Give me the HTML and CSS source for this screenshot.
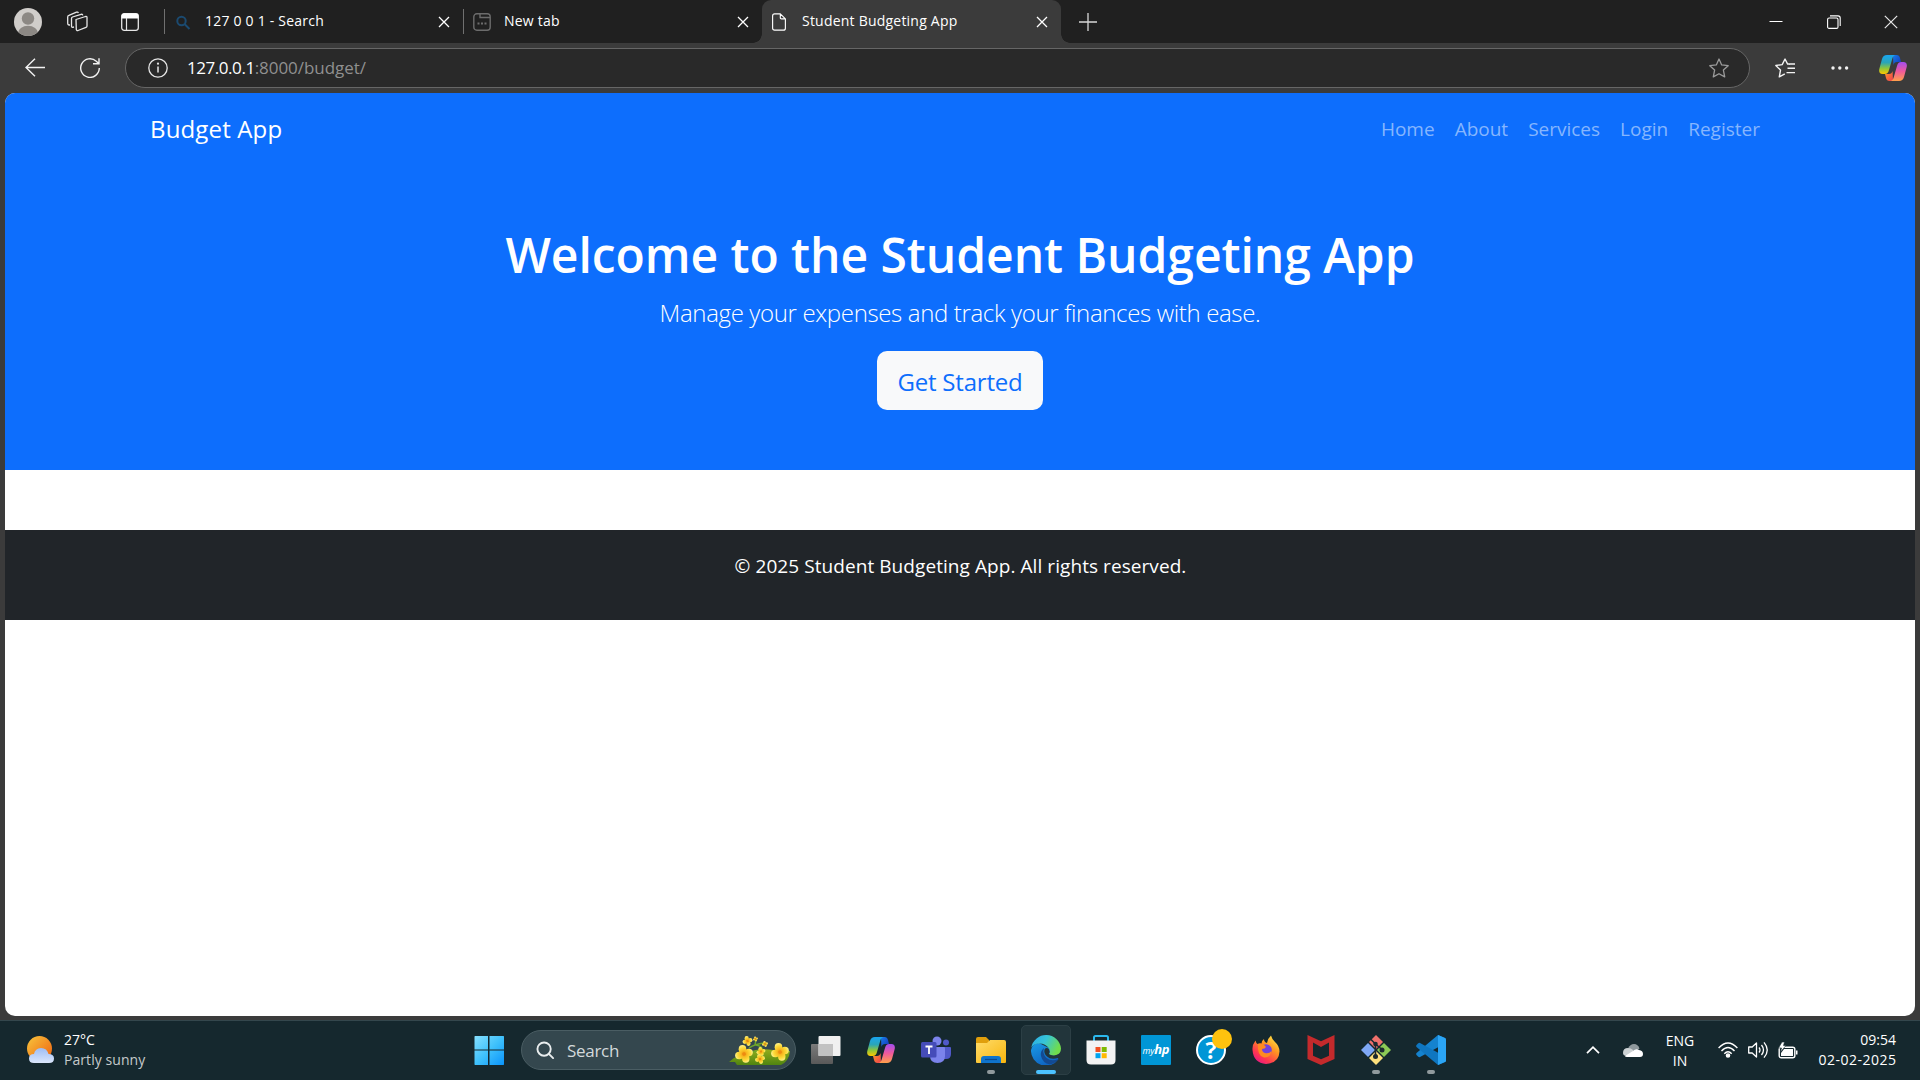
FILE: index.html
```html
<!DOCTYPE html>
<html lang="en">
<head>
<meta charset="utf-8">
<title>Student Budgeting App</title>
<link rel="stylesheet" href="styles.css">
</head>
<body>
<svg class="defs" aria-hidden="true">
  <defs>
    <linearGradient id="cpA" x1="0" y1="0" x2="0" y2="1"><stop offset="0" stop-color="#19a5f0"/><stop offset=".4" stop-color="#2aa5b8"/><stop offset=".7" stop-color="#8fc63a"/><stop offset="1" stop-color="#ffc800"/></linearGradient>
    <linearGradient id="cpB" x1="0" y1="0" x2="0" y2="1"><stop offset="0" stop-color="#a24df0"/><stop offset=".5" stop-color="#f05a9a"/><stop offset="1" stop-color="#ffa04a"/></linearGradient>
    <linearGradient id="cpC" x1="0" y1="0" x2="1" y2="1"><stop offset="0" stop-color="#1b7be8"/><stop offset="1" stop-color="#1236b8"/></linearGradient>
    <linearGradient id="cpD" x1="0" y1="0" x2="1" y2="1"><stop offset="0" stop-color="#ff9a2a"/><stop offset="1" stop-color="#ee3d4e"/></linearGradient>
    <linearGradient id="win" x1="0" y1="0" x2="1" y2="1"><stop offset="0" stop-color="#86e0ff"/><stop offset=".5" stop-color="#3fc1fb"/><stop offset="1" stop-color="#0a94fb"/></linearGradient>
    <linearGradient id="sun" x1="0" y1="0" x2="1" y2="1"><stop offset="0" stop-color="#f8c63c"/><stop offset="1" stop-color="#ee5f10"/></linearGradient>
    <linearGradient id="cloud" x1="0" y1="0" x2="0" y2="1"><stop offset="0" stop-color="#9dbdf5"/><stop offset="1" stop-color="#dbe6fb"/></linearGradient>
    <linearGradient id="folder" x1="0" y1="0" x2="1" y2="1"><stop offset="0" stop-color="#ffdc6a"/><stop offset="1" stop-color="#f8b50d"/></linearGradient>
    <linearGradient id="edgeA" x1="0" y1="0" x2="1" y2=".4"><stop offset="0" stop-color="#2aa9e8"/><stop offset=".5" stop-color="#36c5d8"/><stop offset="1" stop-color="#6fdc4d"/></linearGradient>
    <linearGradient id="edgeB" x1="0" y1="0" x2=".6" y2="1"><stop offset="0" stop-color="#1a9be6"/><stop offset="1" stop-color="#0e62c0"/></linearGradient>
    <linearGradient id="fox" x1=".9" y1="0" x2=".2" y2="1"><stop offset="0" stop-color="#fff04a"/><stop offset=".4" stop-color="#ff9422"/><stop offset=".75" stop-color="#ff3750"/><stop offset="1" stop-color="#e3158a"/></linearGradient>
    <linearGradient id="gray" x1="0" y1="0" x2="0" y2="1"><stop offset="0" stop-color="#7b7b7b"/><stop offset="1" stop-color="#595959"/></linearGradient>
    <linearGradient id="hill" x1="0" y1="0" x2="0" y2="1"><stop offset="0" stop-color="#93ad1c"/><stop offset="1" stop-color="#4f8410"/></linearGradient>
    <radialGradient id="petal" gradientUnits="userSpaceOnUse" cx="0" cy="0" r="9"><stop offset="0" stop-color="#ee900f"/><stop offset=".35" stop-color="#f9bd22"/><stop offset=".7" stop-color="#fddc3c"/><stop offset="1" stop-color="#fff08a"/></radialGradient>
    <symbol id="copilot" viewBox="0 0 28 26">
      <path d="M14 0h3.500c2 0 3 1 3.500 3l1 4h-4c-2 0-3 1-3.600 3z" fill="url(#cpC)"/>
      <path d="M14 26h-3.500c-2 0-3-1-3.500-3l-1-4h4c2 0 3-1 3.600-3z" fill="url(#cpD)"/>
      <path d="M8 0h8.500c-2 .6-2.700 2-3.300 4L10 15c-.7 2.500-1.800 4-4.300 4H3.500C.7 19-.3 17 .3 14L3 4C3.800 1.300 5.300 0 8 0z" fill="url(#cpA)"/>
      <path d="M20 26h-8.500c2-.6 2.700-2 3.300-4L18 11c.7-2.500 1.800-4 4.300-4h2.200c2.800 0 3.800 2 3.200 5L25 22c-.8 2.700-2.300 4-5 4z" fill="url(#cpB)"/>
    </symbol>
    <symbol id="x" viewBox="0 0 12 12"><path d="M1 1l10 10M11 1L1 11" stroke="#fff" stroke-width="1.300" fill="none"/></symbol>
    <symbol id="flower" viewBox="-9 -9 18 18">
      <g fill="url(#petal)"><ellipse cx="-1.500" cy="-4.700" rx="3.800" ry="4.200"/><ellipse cx="4.800" cy="-1.500" rx="4" ry="3.700"/><ellipse cx="1.800" cy="4.700" rx="3.700" ry="4.100"/><ellipse cx="-4.700" cy="1.500" rx="4.200" ry="3.700"/></g>
      <circle r="1.800" fill="#ee8a10"/>
    </symbol>
  </defs>
</svg>

<header class="titlebar">
  <svg class="avatar" viewBox="0 0 28 28"><clipPath id="av"><circle cx="14" cy="14" r="14"/></clipPath><g clip-path="url(#av)"><path fill="#d0cdca" d="M0 0h28v28H0z"/><circle cx="14" cy="10.500" r="6.200" fill="#8c8884"/><ellipse cx="14" cy="25" rx="10" ry="7.200" fill="#8c8884"/></g></svg>
  <svg class="workspaces" viewBox="0 0 21 21" fill="none" stroke="#e6e6e6" stroke-width="1.300" stroke-linejoin="round"><path d="M9 8.500l9.500-3q1.500-.4 1.500 1v8.500q0 1-1 1.400L11 19.500q-1.500.4-1.700-1z"/><path d="M7 16l-1.500.3q-1 0-1-1V7.500q0-1 1-1.500L14 3.300q1.500-.3 1.700 1M3 14H2q-1.300-.2-1.300-1.400V6q0-1.200 1.200-1.600L9.500 1.200q1.500-.4 1.800.8"/></svg>
  <svg class="tabmenu" viewBox="0 0 18 18"><rect x=".7" y=".7" width="16.600" height="16.600" rx="2.500" fill="none" stroke="#e6e6e6" stroke-width="1.300"/><path d="M.5 5.500V3Q.5.500 3 .5h12q2.500 0 2.500 2.500v2.500z" fill="#fff"/><path d="M5.500 5v12" stroke="#e6e6e6" stroke-width="1.200"/></svg>
  <div class="tab">
    <svg class="favicon" viewBox="0 0 18 18" fill="none" stroke="#1b4a70" stroke-width="2"><circle cx="7.500" cy="8" r="4.200"/><path d="M10.500 11l5 5"/></svg>
    <span class="tab-title">127 0 0 1 - Search</span>
    <svg class="close"><use href="#x"/></svg>
  </div>
  <div class="tab">
    <svg class="favicon" viewBox="0 0 18 18" fill="none" stroke="#6c6c6c" stroke-width="1.400"><rect x=".8" y=".8" width="16.400" height="16.400" rx="3"/><path d="M7 1v3.500h10" /><path d="M4.500 10.500h2M8 10.500h2M11.500 10.500h2" stroke-width="2"/></svg>
    <span class="tab-title">New tab</span>
    <svg class="close"><use href="#x"/></svg>
  </div>
  <div class="tab tab-active">
    <svg class="favicon doc" viewBox="0 0 16 20" fill="none" stroke="#fff" stroke-width="1.300" stroke-linejoin="round"><path d="M3 .7h6.500L15.300 6.500V17q0 2.300-2.300 2.300H3Q.7 19.300.7 17V3Q.7.700 3 .7zM9.500.8V5q0 1.500 1.500 1.500h4"/></svg>
    <span class="tab-title">Student Budgeting App</span>
    <svg class="close"><use href="#x"/></svg>
  </div>
  <svg class="newtab" viewBox="0 0 18 18"><path d="M9 0v18M0 9h18" stroke="#d8d8d8" stroke-width="1.300"/></svg>
  <div class="window-controls">
    <svg viewBox="0 0 14 14"><path d="M.5 6.500h13" stroke="#fff"/></svg>
    <svg viewBox="0 0 14 14" fill="none" stroke="#fff" stroke-width="1.100"><rect x=".6" y="3" width="10.400" height="10.400" rx="1.500"/><path d="M3 .9h8q2.200 0 2.200 2.200v8"/></svg>
    <svg viewBox="0 0 14 14"><path d="M.8.800l12.400 12.400M13.200.800L.8 13.200" stroke="#e8e8e8" stroke-width="1.200"/></svg>
  </div>
</header>

<div class="toolbar">
  <svg class="back" viewBox="0 0 20 20" fill="none" stroke="#f2f2f2" stroke-width="1.400"><path d="M20 9.500H1M10 .8L1 9.500l9 8.700"/></svg>
  <svg class="refresh" viewBox="0 0 20 20" fill="none" stroke="#f2f2f2" stroke-width="1.400"><path d="M19.300 10a9.300 9.300 0 1 1-3-6.800L19 5.700M19 .3v5.500h-6"/></svg>
  <div class="address">
    <svg class="ico" viewBox="0 0 20 20"><circle cx="10" cy="10" r="9.200" fill="none" stroke="#e6e6e6" stroke-width="1.300"/><path d="M10 8.500v6" stroke="#e6e6e6" stroke-width="1.500"/><circle cx="10" cy="5.700" r="1.100" fill="#e6e6e6"/></svg>
    <span class="url"><span class="host">127.0.0.1</span><span class="path">:8000/budget/</span></span>
    <svg class="ico" viewBox="0 0 20 20" fill="none" stroke="#9a9a9a" stroke-width="1.300" stroke-linejoin="round"><path d="M10 1l2.700 5.900 6.500.8-4.800 4.400 1.300 6.800-5.700-3.200-5.700 3.200 1.300-6.800L.8 7.700l6.500-.8z"/></svg>
  </div>
  <svg class="favs" viewBox="0 0 20 20" fill="none" stroke="#f2f2f2" stroke-width="1.400" stroke-linejoin="round"><path d="M15 6.200l-2.500-.3L10 1 7.200 6.600l-6.400.9 4.700 4.600-1.200 6.800 5.500-3M12 6h8M12.500 10.300H20M11.500 14.600H20"/></svg>
  <svg class="dots" viewBox="0 0 18 4" fill="#f2f2f2"><circle cx="2" cy="2" r="1.700"/><circle cx="8.800" cy="2" r="1.700"/><circle cx="15.600" cy="2" r="1.700"/></svg>
  <svg class="copilot"><use href="#copilot"/></svg>
</div>

<main class="page">
  <nav class="navbar">
    <a class="brand">Budget App</a>
    <ul class="links"><li>Home</li><li>About</li><li>Services</li><li>Login</li><li>Register</li></ul>
  </nav>
  <section class="hero">
    <h1>Welcome to the Student Budgeting App</h1>
    <p class="lead">Manage your expenses and track your finances with ease.</p>
    <a class="btn">Get Started</a>
  </section>
  <footer class="footer"><p>© 2025 Student Budgeting App. All rights reserved.</p></footer>
</main>

<footer class="taskbar">
  <div class="weather">
    <svg viewBox="0 0 28 28"><circle cx="12.500" cy="12.500" r="12.500" fill="url(#sun)"/><path d="M7 27q-5 0-5-4.500T7 18q1-5.500 7-6 6 0 7.500 6 5.500 0 5.500 4.500T22 27z" fill="url(#cloud)"/></svg>
    <div class="two-line"><span>27°C</span><span class="condition">Partly sunny</span></div>
  </div>
  <div class="apps">
    <div class="app"><svg viewBox="0 0 30 30"><path d="M1 1h13v13.500H.5V1.500zM15.500 1h14l.5.500v13H15.500zM.5 15.500H14V30H1l-.5-.5zM15.500 15.500H30v14l-.5.500h-14z" fill="url(#win)"/></svg></div>
    <div class="search">
      <svg class="lens" viewBox="0 0 20 20" fill="none" stroke="#e9edee" stroke-width="2" stroke-linecap="round"><circle cx="8.500" cy="8.500" r="7"/><path d="M13.500 13.500l4.500 4.500"/></svg>
      <span class="search-text">Search</span>
      <svg class="flowers" viewBox="0 0 62 32"><path d="M0 28l5-4 3-1Q26 13 44 16l17 1q-1 10-9 14H8l-2-3z" fill="url(#hill)"/><path d="M20 14q6-4 15-5M27 11q7 1 7 7M26 11l1-6M22 18l9-1" stroke="#6fa62a" stroke-width="1.500" fill="none"/><use href="#flower" x="6" y="11" width="18" height="18"/><use href="#flower" x="42" y="9" width="18" height="18"/><use href="#flower" x="12" y="2" width="13" height="10"/><use href="#flower" x="27" y="13" width="10" height="9"/><use href="#flower" x="32" y="7" width="8" height="6"/><use href="#flower" x="24" y="1" width="5" height="8"/><use href="#flower" x="26" y="20" width="10" height="10"/></svg>
    </div>
    <div class="app"><svg viewBox="0 0 30 30"><rect y="9" width="22" height="20" rx="1" fill="url(#gray)"/><rect x="7.500" y="1" width="22" height="20" rx="1" fill="#f0f0f0"/><path d="M7.500 9H22v12H7.500z" fill="#c2c2c2"/></svg></div>
    <div class="app"><svg class="cp"><use href="#copilot"/></svg></div>
    <div class="app"><svg viewBox="0 0 30 30"><circle cx="25" cy="7.500" r="3" fill="#5059c9"/><path d="M20 12h9q1 0 1 1v6q0 5-5 5h-4z" fill="#5059c9"/><circle cx="16" cy="6" r="4.500" fill="#7b83eb"/><path d="M9 12h14q1 0 1 1v8q0 7-7.500 7T9 21z" fill="#7b83eb"/><rect y="7" width="15.500" height="15.500" rx="1.500" fill="#454cb8"/><path d="M4.500 11.500h7M8 11.500v7.500" stroke="#fff" stroke-width="1.800"/></svg></div>
    <div class="app run"><svg viewBox="0 0 30 30"><path d="M0 4q0-2 2-2h8l3 3v6H0z" fill="#e09f0c"/><path d="M0 8h11l3-3h14q2 0 2 2v20q0 1-1 1H1q-1 0-1-1z" fill="url(#folder)"/><path d="M5 28v-4q0-3 3-3h14q3 0 3 3v4z" fill="#0f74cc"/><path d="M9 24.500h12" stroke="#0a4a90" stroke-width="1.200"/></svg></div>
    <div class="app active"><svg viewBox="0 0 30 30"><path d="M0 15Q1 9 8 8l10 5 9.500 11A15 15 0 0 1 0 15z" fill="url(#edgeB)"/><path d="M.3 12.500A15 15 0 0 1 30 13.500q0 6-6 7-4 .5-6-1 2-3 0-6Q14.500 8.500 8.500 8.500 3 8.500.3 12.500z" fill="url(#edgeA)"/><path d="M13 13q-4 3-3 8 1.500 7 9 8.500Q25 28 27.500 24q-7 3-12-1-4.500-4.500-2.500-10z" fill="#134a92"/><path d="M13.500 14.500q2-2.500 4.300-.5 1.500 2.500 0 5 2.700 2 6.500 1.200l4.500-1.500-1.300 4q-7.500 2.500-11.500-1.200-3.500-3-2.500-7z" fill="#22353b"/></svg></div>
    <div class="app"><svg viewBox="0 0 30 30"><path d="M8 7V2.500Q8 1 9.500 1h11Q22 1 22 2.500V7" fill="none" stroke="#2bb9ee" stroke-width="2"/><path d="M.5 5.500h29V25q0 4.500-4.500 4.500H5Q.5 29.500.5 25z" fill="#f3f3f3"/><path d="M9.500 12h5v5h-5z" fill="#f25022"/><path d="M15.700 12h5v5h-5z" fill="#7fba00"/><path d="M9.500 18.200h5v5h-5z" fill="#00a4ef"/><path d="M15.700 18.200h5v5h-5z" fill="#ffb900"/></svg></div>
    <div class="app"><div class="myhp">my<b>hp</b></div></div>
    <div class="app"><span class="q">?</span><i class="badge"></i></div>
    <div class="app"><svg viewBox="0 0 30 30"><path d="M1.500 15Q1 10 4.500 5.500 5 8 6.500 9q2-1 4-.5 0-3 2.500-4.500 0 3 3 4 1-5 4-7.500 1 4 4 6.500 4.500 4 4.500 9.500Q28 28 15 29 2.500 28 1.500 15z" fill="url(#fox)"/><circle cx="15" cy="15" r="5.800" fill="#7142dd"/><path d="M7 9q5-1 8 3-1 2-4 2 0 3 3 4 4 1 6.500-2-1 7-7.500 6.500Q6 21 7 9z" fill="#ff8a20"/></svg></div>
    <div class="app"><svg viewBox="0 0 30 30"><path d="M1.500 0L15 6.200 28.500 0v24L15 30 1.500 24zM7 7.500v13.200l8 3.600 8-3.600V7.500L15 12z" fill="#c42a2c" fill-rule="evenodd"/></svg></div>
    <div class="app run"><svg viewBox="0 0 30 30"><path d="M15 0l7 7-7 7-7-7z" fill="#f0716c"/><path d="M7 8l7 7-7 7-7-7z" fill="#7fa8f5"/><path d="M23 8l7 7-7 7-7-7z" fill="#8cc955"/><path d="M15 16l7 7-7 7-7-7z" fill="#fde07c"/><g stroke="#1c2a2f" stroke-width="1.600" fill="none"><path d="M9.500 4l5 5v13M14.500 9l7 6"/></g><g fill="#1c2a2f"><circle cx="14.500" cy="9" r="2.300"/><circle cx="21" cy="15" r="2.500"/><circle cx="14.500" cy="21.500" r="2.500"/></g></svg></div>
    <div class="app run"><svg viewBox="0 0 30 30"><path d="M22 0l7 3q1 .5 1 1.500V8L4 22q-1 .5-2-.5L.5 20q-.7-1 0-2z" fill="#1583cf"/><path d="M22 30l7-3q1-.5 1-1.500V22L4 8q-1-.5-2 .5L.5 10q-.7 1 0 2z" fill="#0f76c0"/><path d="M22 0l7 3q1 .5 1 1.500v21q0 1-1 1.500l-7 3z" fill="#2ba5f5"/></svg></div>
  </div>
  <div class="tray">
    <svg class="chev" viewBox="0 0 14 8"><path d="M1 7.200l6-6 6 6" fill="none" stroke="#fff" stroke-width="1.700"/></svg>
    <svg class="cloud" viewBox="0 0 20 13"><path d="M5 4.500Q7 0 11 0q4 0 5.500 4.500L12 8z" fill="#8e989c"/><path d="M0 9q0-5 5-5 3 0 5 2l2 6H4Q0 12 0 9z" fill="#cdd2d4"/><path d="M2 12l8-5q3-3 6-1 4 .5 4 4 0 3-3 3H4q-2 0-2-1z" fill="#fff"/></svg>
    <div class="lang"><span>ENG</span><span>IN</span></div>
    <svg class="wifi" viewBox="0 0 20 16" fill="none" stroke="#fff" stroke-width="1.400"><path d="M.6 6Q10-4 19.400 6M3.500 9Q10 2 16.500 9M6.300 11.700q3.700-4 7.400 0"/><circle cx="10" cy="13.500" r="1.600" fill="#fff"/></svg>
    <svg class="sound" viewBox="0 0 20 18" fill="none" stroke="#fff" stroke-width="1.300" stroke-linejoin="round"><path d="M.7 6h3.500L8.500 2v14l-4.300-4H.7zM11 6.500q2 2.500 0 5M13.500 4q4 5 0 10M16 1.300q6.500 7.700 0 15.400"/></svg>
    <svg class="battery" viewBox="0 0 20 17"><rect x="1.200" y="5.200" width="15.600" height="10.600" rx="2" fill="none" stroke="#fff" stroke-width="1.400"/><path d="M6 7h9v7H3v-3z" fill="#fff"/><path d="M18 8.500h1.500v4H18z" fill="#fff"/><path d="M4 0h2.500L5.500 3.500H8L2.500 10 3.500 6H.5z" fill="#fff" stroke="#152a30" stroke-width=".6"/></svg>
    <div class="clock"><span>09:54</span><span class="date">02-02-2025</span></div>
  </div>
</footer>
</body>
</html>
```
FILE: styles.css
```css
* { box-sizing: border-box; }
html, body { height: 100%; margin: 0; }
body { display: flex; flex-direction: column; overflow: hidden; background: #3b3b3b; color: #fff; font-family: "Open Sans", "Noto Sans", sans-serif; font-size: 15px; }
svg { display: block; flex: none; }
span, a, li { white-space: nowrap; }
.defs { position: absolute; width: 0; height: 0; }

.titlebar { display: flex; align-items: center; flex: none; height: 43px; padding-left: 14px; background: #202020; }
.avatar { width: 28px; height: 28px; }
.workspaces { width: 21px; height: 21px; margin-left: 25px; }
.tabmenu { width: 18px; height: 18px; margin: 0 25px 0 33px; }
.tab { display: flex; align-items: center; width: 299px; height: 43px; padding: 0 13px 0 10px; position: relative; }
.tab:not(.tab-active)::before { content: ""; position: absolute; left: 0; top: 9px; width: 1px; height: 25px; background: #707070; }
.favicon { width: 18px; height: 18px; margin-right: 13px; }
.doc { width: 14px; height: 20px; margin: 0 16px 0 0; }
.tab-title { flex: 1; font-size: 14px; line-height: 20px; margin-top: -2px; letter-spacing: .22px; }
.close { width: 12px; height: 12px; }
.tab-active { background: #3b3b3b; border-radius: 9px 9px 0 0; }
.tab-active::before, .tab-active::after { content: ""; position: absolute; bottom: 0; width: 9px; height: 9px; }
.tab-active::before { left: -9px; background: radial-gradient(circle at 0 0, transparent 8.5px, #3b3b3b 9px); }
.tab-active::after { right: -9px; background: radial-gradient(circle at 100% 0, transparent 8.5px, #3b3b3b 9px); }
.newtab { width: 18px; height: 18px; margin-left: 18px; }
.window-controls { display: flex; gap: 43.500px; margin-left: auto; padding-right: 22px; }
.window-controls svg { width: 14px; height: 14px; }

.toolbar { display: flex; align-items: center; flex: none; height: 50px; padding-left: 25px; }
.back, .refresh, .ico, .favs { width: 20px; height: 20px; }
.refresh { margin-left: 35px; }
.address { display: flex; align-items: center; width: 1625px; height: 40px; margin-left: 25px; padding: 0 20px 0 22px; border: 1px solid #666; border-radius: 20px; background: #292929; }
.url { flex: 1; margin-left: 19px; font-size: 17px; line-height: 24px; }
.host { letter-spacing: -.45px; }
.path { color: #909090; letter-spacing: -.05px; }
.favs { margin-left: 25px; }
.dots { width: 18px; height: 4px; margin-left: 36px; }
.copilot { width: 28px; height: 26px; margin-left: 30px; }

.page { flex: none; height: 923px; margin: 0 5px; border-radius: 10px; overflow: hidden; background: #fff; }
.navbar { display: flex; align-items: center; justify-content: space-between; height: 70px; padding: 0 145px; background: #0d6efd; }
.brand { font-size: 24px; letter-spacing: .15px; }
.links { display: flex; gap: 20px; margin: 0; padding: 2px 10px 0 0; list-style: none; font-size: 19px; color: #86b6fe; }
.hero { display: flex; flex-direction: column; align-items: center; height: 307px; padding-top: 62px; background: #0d6efd; }
.hero h1 { margin: 0 0 9px; font-size: 48px; font-weight: 600; line-height: 60px; letter-spacing: -.05px; }
.lead { margin: 0 0 19px; font-size: 24px; font-weight: 300; line-height: 38px; letter-spacing: -.35px; }
.btn { display: flex; align-items: center; justify-content: center; width: 166px; height: 59px; padding-top: 2px; border-radius: 10px; background: #f8f9fa; color: #0d6efd; font-size: 24px; letter-spacing: -.2px; }
.footer { height: 90px; margin-top: 60px; padding: 21px 0 0 1px; background: #212529; text-align: center; font-size: 19px; line-height: 30px; letter-spacing: .07px; }
.footer p { margin: 0; }

.taskbar { display: flex; align-items: center; flex: none; height: 60px; margin-top: 4px; padding-bottom: 1px; border-top: 1px solid #34474d; background: #15282e; }
.weather { display: flex; align-items: center; width: 464px; padding-left: 27px; gap: 9px; }
.weather svg { width: 28px; height: 28px; }
.two-line, .lang, .clock { display: flex; flex-direction: column; font-size: 14px; line-height: 20px; }
.condition { color: #c5cacb; letter-spacing: .06px; }
.apps { display: flex; align-items: center; gap: 5px; }
.app { display: flex; align-items: center; justify-content: center; width: 50px; height: 50px; position: relative; border-radius: 5px; }
.app svg { width: 30px; height: 30px; }
.app .cp { width: 28px; height: 26px; }
.run::after, .active::after { content: ""; position: absolute; bottom: 1px; width: 8px; height: 4px; border-radius: 2px; background: #909a9d; }
.active { background: #22353b; border: 1px solid #2c3f45; }
.active::after { bottom: 0; width: 20px; background: #4cc2ff; }
.search { display: flex; align-items: center; width: 275px; height: 40px; margin-left: 2px; padding: 0 4px 0 14px; border: 1px solid #4a5d63; border-radius: 20px; background: #34474e; }
.lens { width: 19px; height: 19px; }
.search-text { flex: 1; margin-left: 12px; color: #d3d9db; font-size: 17px; letter-spacing: -.3px; }
.flowers { width: 62px; height: 32px; }
.myhp { width: 30px; height: 30px; background: #0096d6; border-radius: 1px; text-align: center; font: italic 9px/29px "Open Sans", sans-serif; letter-spacing: -.2px; }
.myhp b { font-size: 13px; }
.q { width: 30px; height: 30px; border: 2px solid #fff; border-radius: 50%; background: #0096d6; text-align: center; font-size: 23px; font-weight: 700; line-height: 26px; }
.badge { position: absolute; left: 26px; top: 4px; width: 20px; height: 20px; border-radius: 50%; background: #ffc20e; }
.tray { display: flex; align-items: center; margin-left: auto; padding-right: 24px; }
.chev { width: 14px; height: 8px; }
.cloud { width: 20px; height: 13px; margin-left: 23px; }
.lang { align-items: center; width: 30px; margin: 1px 23px 0 22px; }
.wifi { width: 20px; height: 16px; }
.sound { width: 20px; height: 18px; margin: 0 10px; }
.battery { width: 20px; height: 17px; }
.clock { align-items: flex-end; width: 98px; padding-bottom: 1px; }
.date { letter-spacing: .5px; margin-right: -.5px; }
```
